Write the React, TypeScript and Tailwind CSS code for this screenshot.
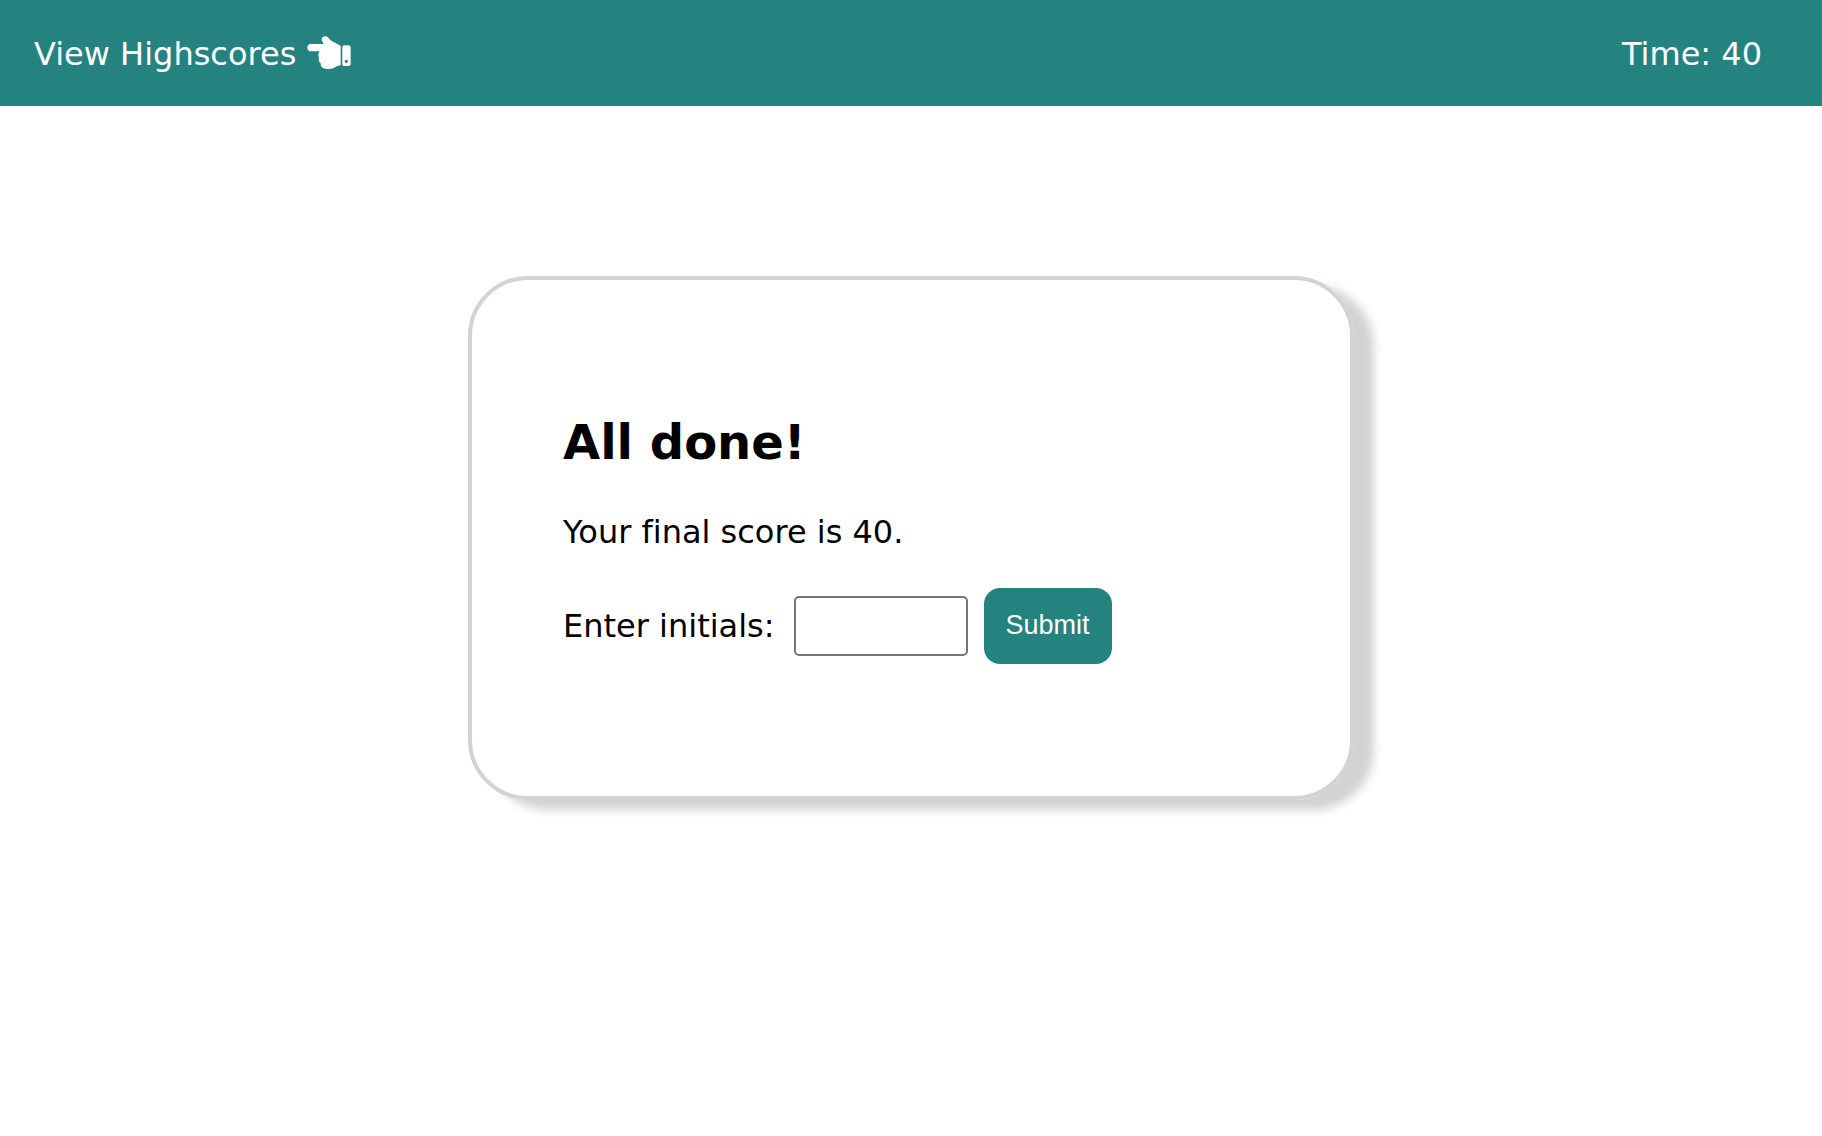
import { useState } from "react";

function PointingHand() {
  return (
    <svg
      viewBox="22 32 132 99"
      className="mt-0.5 h-[33px] w-11"
      fill="currentColor"
      aria-hidden="true"
    >
      <path d="M33 56H69C71 56 72 55 71 53C68 50 66 46 66 42C66 36 71 33 77 33C82 33 86 36 89 40C94 47 101 49 108 53C113 56 118 60 123 61V120C116 121 110 124 104 127C97 130 90 131 82 131C69 131 62 124 63 114C58 110 56 103 58 97C55 91 55 83 60 78H33C27 78 23 73 23 67C23 61 27 56 33 56Z" />
      <path
        fillRule="evenodd"
        d="M134 60H146C150 60 153 63 153 67V115C153 119 150 122 146 122H134C130 122 128 119 128 115V67C128 63 130 60 134 60ZM140 103A5 5 0 1 0 140 113A5 5 0 1 0 140 103Z"
      />
    </svg>
  );
}

function Header({ time }: { time: number }) {
  return (
    <header className="flex items-center justify-between bg-[#24837f] pt-[34px] pr-[60px] pb-8 pl-[34px] text-[32px] leading-10 text-white">
      <a href="#highscores" className="flex h-10 items-start gap-[11px]">
        View Highscores
        <PointingHand />
      </a>
      <p>Time: {time}</p>
    </header>
  );
}

function ScoreCard({ score }: { score: number }) {
  const [initials, setInitials] = useState("");
  return (
    <section className="mx-auto mt-[170px] w-full max-w-[886px] rounded-[60px] border-4 border-[#d3d3d3] px-[91px] py-[132px] shadow-[20px_10px_10px_#d3d3d3]">
      <h1 className="text-5xl leading-[60px] font-bold">All done!</h1>
      <p className="mt-10 text-[32px] leading-10">Your final score is {score}.</p>
      <form
        className="mt-9 flex flex-wrap items-center gap-4"
        onSubmit={(event) => event.preventDefault()}
      >
        <label htmlFor="initials" className="pr-[3px] text-[32px] leading-10">
          Enter initials:
        </label>
        <input
          id="initials"
          type="text"
          value={initials}
          onChange={(event) => setInitials(event.target.value)}
          className="h-[60px] w-[174px] rounded-[5px] border-2 border-[#767676] bg-white px-2 text-[26px]"
        />
        <button
          type="submit"
          className="h-[76px] w-32 rounded-2xl bg-[#24837f] pb-0.5 font-['Liberation_Sans',sans-serif] text-[27px] text-white"
        >
          Submit
        </button>
      </form>
    </section>
  );
}

export default function App() {
  return (
    <div className="min-h-screen bg-white font-['DejaVu_Sans',sans-serif] text-black [font-variant-ligatures:none]">
      <Header time={40} />
      <main className="px-4">
        <ScoreCard score={40} />
      </main>
    </div>
  );
}
